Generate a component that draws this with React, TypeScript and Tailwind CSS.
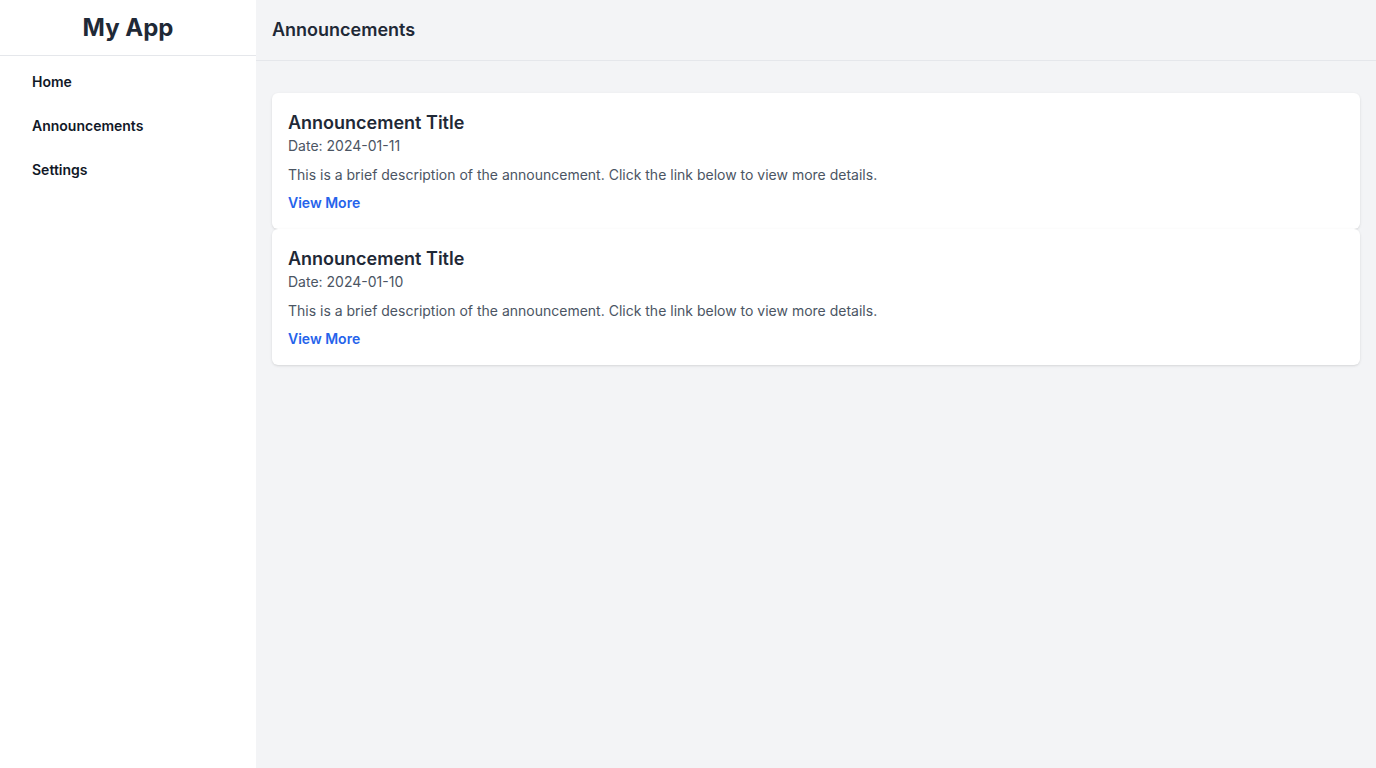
import React from "react";

const announcements = [
  { id: 1, title: "Announcement Title", date: "2024-01-11" },
  { id: 2, title: "Announcement Title", date: "2024-01-10" },
];

const navItems = ["Home", "Announcements", "Settings"];

export default function App() {
  return (
    <div className="flex h-screen w-full font-['Inter',sans-serif] text-gray-800">
      {/* Sidebar */}
      <aside className="w-64 shrink-0 bg-white flex flex-col">
        <div className="h-14 flex items-center justify-center border-b border-gray-200">
          <h1 className="text-2xl font-bold text-[#1f2937]">My App</h1>
        </div>
        <nav className="flex flex-col pt-1">
          {navItems.map((item) => (
            <a key={item} href="#" className="px-8 py-3 text-sm font-semibold text-[#111827]">
              {item}
            </a>
          ))}
        </nav>
      </aside>

      {/* Main */}
      <main className="flex-1 bg-[#f3f4f6] flex flex-col">
        <header className="h-[61px] px-4 flex items-center border-b border-gray-200">
          <h2 className="text-lg font-semibold text-[#1f2937]">Announcements</h2>
        </header>
        <section className="px-4 pt-8 flex flex-col">
          {announcements.map((a) => (
            <div key={a.id} className="bg-white rounded-md shadow-sm px-4 pt-4 pb-[15px]">
              <h3 className="text-lg leading-[27px] font-semibold text-[#1f2937]">{a.title}</h3>
              <p className="text-sm text-[#4b5563]">Date: {a.date}</p>
              <p className="mt-[9px] text-sm text-[#4b5563]">
                This is a brief description of the announcement. Click the link below to view more details.
              </p>
              <a href="#" className="mt-2 inline-block text-sm font-semibold text-[#2563eb]">
                View More
              </a>
            </div>
          ))}
        </section>
      </main>
    </div>
  );
}
